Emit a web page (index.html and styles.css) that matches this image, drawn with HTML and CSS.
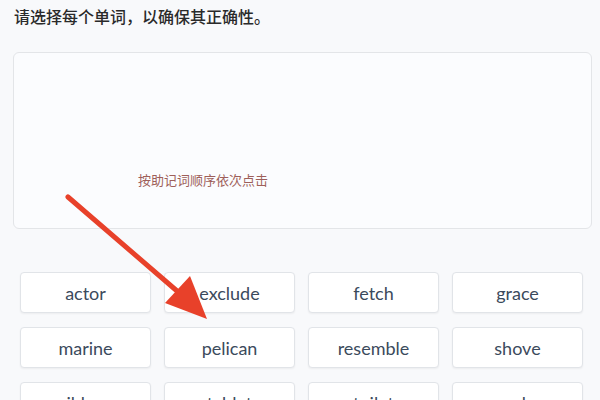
FILE: index.html
```html
<!DOCTYPE html>
<html lang="zh">
<head>
<meta charset="utf-8">
<link rel="stylesheet" href="styles.css">
</head>
<body>
<div class="page">
  <div class="title">请选择每个单词，以确保其正确性。</div>
  <div class="box">
    <div class="hint">按助记词顺序依次点击</div>
  </div>
  <div class="grid">
    <div class="word">actor</div>
    <div class="word">exclude</div>
    <div class="word">fetch</div>
    <div class="word">grace</div>
    <div class="word">marine</div>
    <div class="word">pelican</div>
    <div class="word">resemble</div>
    <div class="word">shove</div>
    <div class="word">ribbon</div>
    <div class="word">tablet</div>
    <div class="word">toilet</div>
    <div class="word">snake</div>
  </div>
  <svg class="arrow" width="600" height="400" viewBox="0 0 600 400">
    <line x1="68" y1="197" x2="184" y2="297" stroke="#e8412a" stroke-width="5" stroke-linecap="round"/>
    <polygon points="207,319 165,303 190,276" fill="#e8412a"/>
  </svg>
</div>
</body>
</html>
```
FILE: styles.css
```css
html, body {
  margin: 0;
  padding: 0;
  background: #f8f9fb;
  width: 600px;
  height: 400px;
  overflow: hidden;
}
.page {
  position: relative;
  width: 600px;
  height: 400px;
  font-family: "Noto Sans CJK SC", "Noto Sans", sans-serif;
}
.title {
  padding: 6px 0 0 14px;
  height: 20px;
  line-height: 20px;
  font-size: 16px;
  font-weight: 500;
  color: #2a2a2a;
}
.box {
  margin: 26px 0 0 13px;
  width: 579px;
  height: 177px;
  padding: 117px 0 0 124px;
  box-sizing: border-box;
  background: #fbfcfe;
  border: 1px solid #e3e5e8;
  border-radius: 6px;
}
.hint {
  font-size: 13px;
  line-height: 20px;
  color: #9e5f5a;
}
.grid {
  display: grid;
  grid-template-columns: repeat(4, 131px);
  grid-auto-rows: 41px;
  column-gap: 13px;
  row-gap: 14px;
  padding: 43px 0 0 20px;
}
.word {
  display: flex;
  align-items: center;
  justify-content: center;
  background: #ffffff;
  border: 1px solid #e1e4e8;
  border-radius: 4px;
  box-shadow: 0 1px 2px rgba(0,0,0,0.05);
  font-family: "Lato", "Noto Sans", sans-serif;
  font-size: 18px;
  color: #3b4a5c;
}
.arrow {
  position: absolute;
  left: 0;
  top: 0;
}
```
